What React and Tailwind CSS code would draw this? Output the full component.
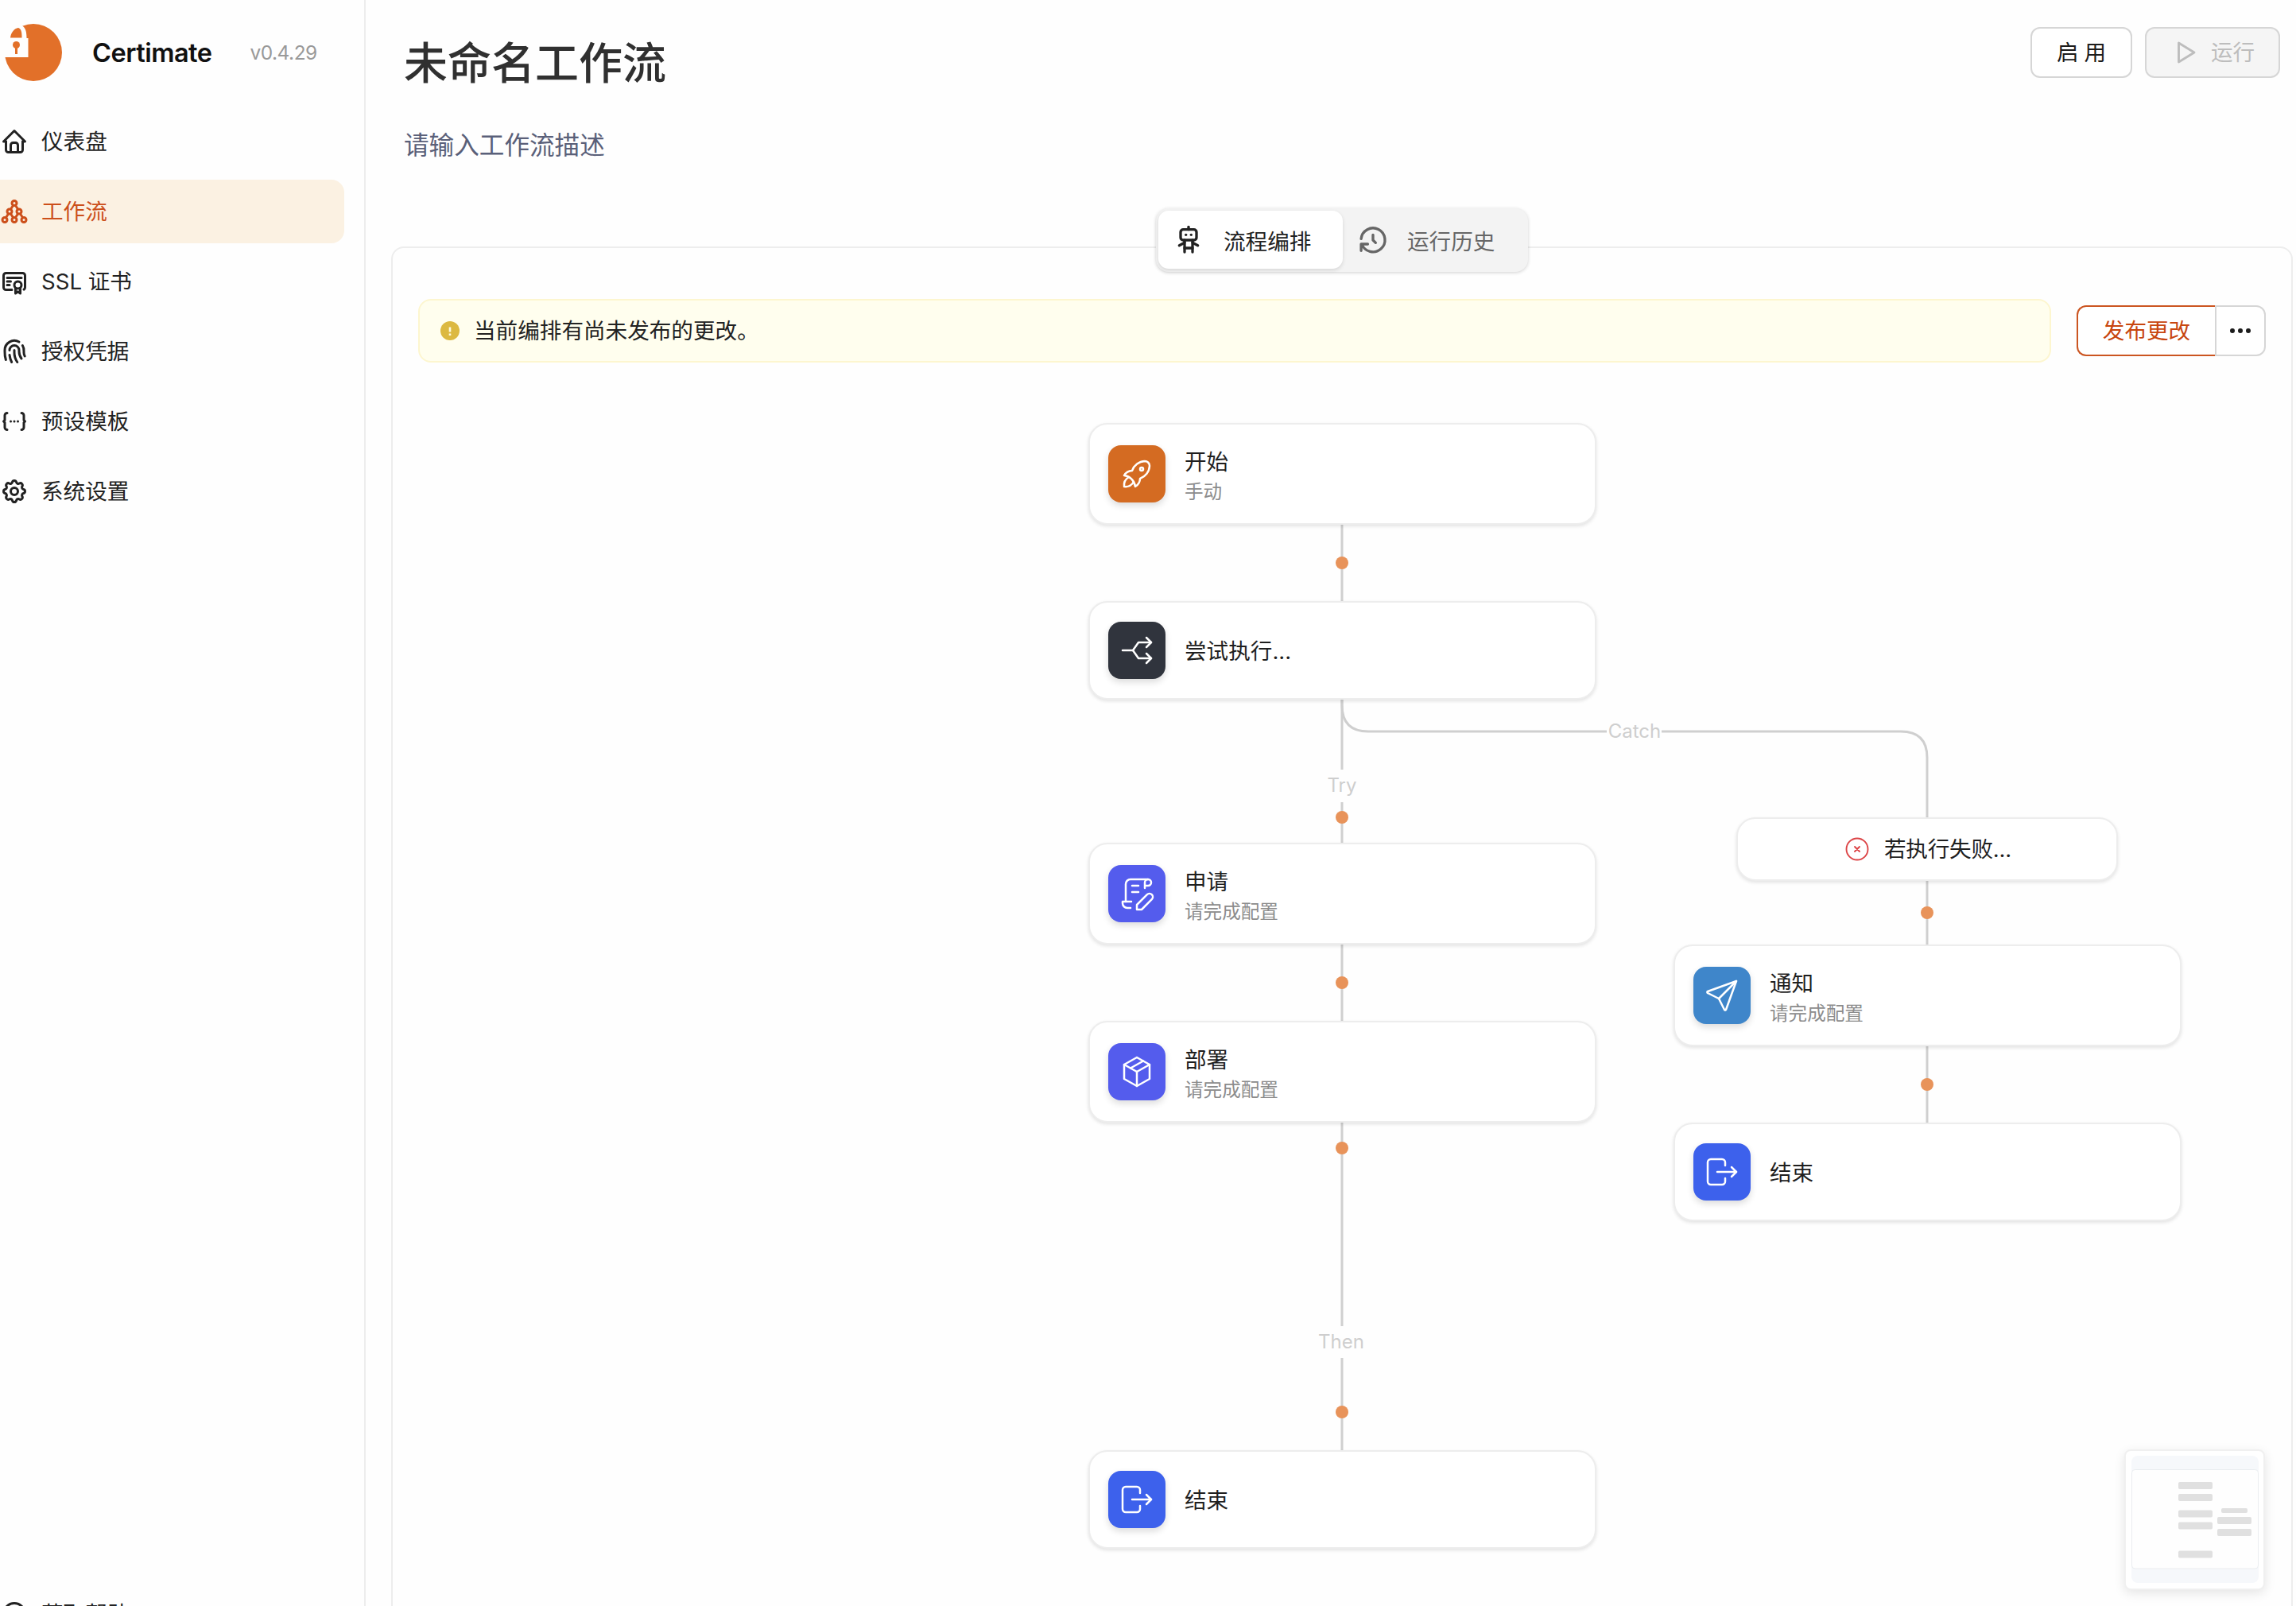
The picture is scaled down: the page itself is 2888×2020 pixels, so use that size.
import {
    TbArrowsSplit,
    TbCertificate,
    TbCircleX,
    TbCodeDots,
    TbContract,
    TbFingerprint,
    TbHelpCircle,
    TbHierarchy3,
    TbHistory,
    TbHome,
    TbLogout,
    TbPackage,
    TbPlayerPlay,
    TbRobot,
    TbRocket,
    TbSend,
    TbSettings,
} from 'react-icons/tb';
import clsx from 'clsx';

const menus = [
    { label: '仪表盘', icon: TbHome },
    { label: '工作流', icon: TbHierarchy3, active: true },
    { label: 'SSL 证书', icon: TbCertificate },
    { label: '授权凭据', icon: TbFingerprint },
    { label: '预设模板', icon: TbCodeDots },
    { label: '系统设置', icon: TbSettings },
];

// Bars shown in the minimap, in minimap units
const minimapBars = [
    [59, 33, 43, 9],
    [59, 48, 43, 9],
    [59, 68.5, 43, 9],
    [59, 83.5, 43, 9],
    [59, 119.5, 43, 9],
    [113, 66, 33, 6],
    [108, 77, 43, 9],
    [108, 92, 43, 9],
];

const Logo = () => (
    <svg viewBox="0 0 72 72" className="w-[72px] h-[72px] shrink-0">
        <circle cx="36" cy="36" r="36" fill="#e27029" />
        <path d="M-1 -1H22V2.500C26 4.500 27.500 10 27.500 18H29.500V42H-1Z" fill="#fefefe" />
        <path d="M7 17.500C7.500 11.500 12 5.500 17 5C20.500 6.500 21.500 9 21.500 17.500Z" fill="#e27029" />
        <circle cx="14.500" cy="26.500" r="4.500" fill="#e27029" />
        <path d="M14.500 28V38" stroke="#e27029" strokeWidth="3" />
    </svg>
);

const MenuItem = ({ label, icon: Icon, active }) => (
    <a
        className={clsx(
            'flex items-center gap-4 h-20 rounded-r-[16px] text-[27.6px] leading-none',
            active ? 'bg-[#fbf1e2] text-[#cc4f1b]' : 'text-[#222]'
        )}
    >
        <Icon size={36} strokeWidth={2} className="shrink-0" />
        <span className="pt-0.5">{label}</span>
    </a>
);

const Sidebar = () => (
    <aside className="w-[460px] shrink-0 h-full border-r-2 border-[#ededed] flex flex-col">
        <div className="flex items-center pl-1.5 pt-[30px]">
            <Logo />
            <span className="ml-[38px] pt-0.5 text-[32.500px] leading-none font-semibold tracking-[-0.5px] text-[#111]">Certimate</span>
            <span className="ml-[48px] text-[24.500px] leading-none text-[#999] tracking-[-0.5px]">v0.4.29</span>
        </div>
        <nav className="flex flex-col gap-2 mt-9 pr-[25px]">
            {menus.map((item) => (
                <MenuItem key={item.label} {...item} />
            ))}
        </nav>
        <div className="mt-auto -mb-[50px] pr-[25px]">
            <MenuItem label="获取帮助" icon={TbHelpCircle} />
        </div>
    </aside>
);

const Header = () => (
    <header className="h-[310px] shrink-0 flex justify-between pl-4 pr-[16px]">
        <div>
            <h1 className="mt-[51px] text-[55px] leading-[56px] font-medium text-[#303030]">未命名工作流</h1>
            <p className="mt-[60px] text-[31.600px] leading-8 text-[#5a6079]">请输入工作流描述</p>
        </div>
        <div className="flex gap-4 mt-[34px] h-16 text-[27.6px] leading-none">
            <button className="w-[128px] rounded-xl border-2 border-[#d6d6d6] bg-white text-[#1c1c1c] flex items-center justify-center gap-[7px] pt-0.5">
                <span>启</span>
                <span>用</span>
            </button>
            <button className="w-[170px] rounded-xl border-2 border-[#d6d6d6] bg-[#f5f5f5] text-[#bdbdbd] flex items-center justify-center gap-[15px]">
                <TbPlayerPlay size={36} strokeWidth={1.9} />
                <span className="pt-0.5">运行</span>
            </button>
        </div>
    </header>
);

const Tabs = () => (
    <div className="absolute left-1/2 -top-[50px] -translate-x-1/2 z-10 flex w-[468px] h-20 p-[3px] rounded-[16px] bg-[#f3f3f3] shadow-[0_1px_4px_rgba(0,0,0,0.18)] text-[27.6px] leading-none">
        <div className="flex items-center h-[73px] w-[232px] pl-[18px] gap-6 rounded-[13px] bg-white text-[#222] shadow-[0_2px_5px_rgba(0,0,0,0.12)]">
            <TbRobot size={40} strokeWidth={2} />
            <span className="pt-1.5">流程编排</span>
        </div>
        <div className="flex items-center h-[73px] pl-[18px] gap-[23px] text-[#666]">
            <TbHistory size={40} strokeWidth={2} />
            <span className="pt-1.5">运行历史</span>
        </div>
    </div>
);

const Toolbar = () => (
    <div className="flex items-center gap-8 px-8 pt-16">
        <div className="flex-1 h-20 flex items-center gap-[18px] pl-[26px] rounded-[16px] border-2 border-[#fdf6cf] bg-[#fffeee]">
            <svg viewBox="0 0 24 24" className="w-6 h-6">
                <circle cx="12" cy="12" r="12" fill="#dcb941" />
                <path d="M12 7.500V13.500M12 15.500V18" stroke="#fffbe0" strokeWidth="2.600" />
            </svg>
            <span className="pt-0.5 text-[27.6px] leading-none text-[#222]">当前编排有尚未发布的更改。</span>
        </div>
        <div className="flex h-16">
            <button className="w-[174px] rounded-l-xl border-2 border-r-0 border-[#cb5521] bg-white pt-0.5 text-[27.6px] leading-none text-[#c8460f]">
                发布更改
            </button>
            <button className="w-[64px] rounded-r-xl border-2 border-[#d6d6d6] bg-white flex items-center justify-center gap-[3.500px]">
                <span className="size-[6.500px] rounded-full bg-[#1c1c1c]" />
                <span className="size-[6.500px] rounded-full bg-[#1c1c1c]" />
                <span className="size-[6.500px] rounded-full bg-[#1c1c1c]" />
            </button>
        </div>
    </div>
);

const FlowNode = ({ className, color, icon: Icon, title, desc }) => (
    <div
        className={clsx(
            'absolute w-[639px] flex items-center gap-6 pl-[23px] rounded-[24px] border-2 border-[#ededed] bg-white shadow-[0_2px_4px_rgba(0,0,0,0.11)]',
            className
        )}
    >
        <div className={clsx('size-[72px] rounded-[16px] flex items-center justify-center text-white shadow-[0_4px_8px_rgba(0,0,0,0.14)]', color)}>
            <Icon size={48} strokeWidth={1.25} />
        </div>
        <div className={desc ? 'pt-[5px]' : 'pt-px'}>
            <div className="text-[27.6px] leading-9 text-[#1f1f1f]">{title}</div>
            {desc && <div className="mt-1 text-[23.6px] leading-8 text-[#8c8c8c]">{desc}</div>}
        </div>
    </div>
);

// Canvas origin is the inner corner of the bordered panel
const Canvas = () => (
    <>
        <svg viewBox="0 0 2388 1708" className="absolute left-0 top-0 w-[2388px] h-[1708px]" fill="none">
            <g stroke="#cfcfcf" strokeWidth="3">
                <path d="M1194 348V444M1194 568V656M1194 697V748M1194 875V972M1194 1100V1356M1194 1396V1512" />
                <path d="M1194 568V575Q1194 608 1227 608H1527M1596 608H1897Q1930 608 1930 641V716" />
                <path d="M1930 796V876M1930 1003V1100" />
            </g>
            <g fill="#e8935a">
                <circle cx="1194" cy="396" r="8" />
                <circle cx="1194" cy="716" r="8" />
                <circle cx="1194" cy="924" r="8" />
                <circle cx="1194" cy="1132" r="8" />
                <circle cx="1194" cy="1464" r="8" />
                <circle cx="1930" cy="836" r="8" />
                <circle cx="1930" cy="1052" r="8" />
            </g>
        </svg>

        <span className="absolute left-[1194px] top-[676px] -translate-1/2 text-[24px] leading-none text-[#cecece]">Try</span>
        <span className="absolute left-[1562px] top-[608px] -translate-1/2 text-[24px] leading-none text-[#cecece]">Catch</span>
        <span className="absolute left-[1193px] top-[1376px] -translate-1/2 text-[24px] leading-none text-[#cecece]">Then</span>

        <FlowNode className="left-[875px] top-[220px] h-[128px]" color="bg-[#d46b22]" icon={TbRocket} title="开始" desc="手动" />
        <FlowNode className="left-[875px] top-[444px] h-[124px]" color="bg-[#30343d]" icon={TbArrowsSplit} title="尝试执行..." />
        <FlowNode className="left-[875px] top-[748px] h-[128px]" color="bg-[#545ced]" icon={TbContract} title="申请" desc="请完成配置" />
        <FlowNode className="left-[875px] top-[972px] h-[128px]" color="bg-[#545ced]" icon={TbPackage} title="部署" desc="请完成配置" />
        <FlowNode className="left-[875px] top-[1512px] h-[124px]" color="bg-[#3d61ec]" icon={TbLogout} title="结束" />
        <FlowNode className="left-[1611px] top-[876px] h-[128px]" color="bg-[#3f86ca]" icon={TbSend} title="通知" desc="请完成配置" />
        <FlowNode className="left-[1611px] top-[1100px] h-[124px]" color="bg-[#3d61ec]" icon={TbLogout} title="结束" />

        <div className="absolute left-[1690px] top-[716px] w-[480px] h-20 flex items-center justify-center gap-4 rounded-[24px] border-2 border-[#ededed] bg-white shadow-[0_2px_4px_rgba(0,0,0,0.11)]">
            <TbCircleX size={36} strokeWidth={1.25} className="text-[#dc4446]" />
            <span className="pt-0.5 text-[27.6px] leading-none tracking-[-0.2px] text-[#1f1f1f]">若执行失败...</span>
        </div>
    </>
);

const Minimap = () => (
    <div className="absolute left-[2178px] top-[1511px] w-[177px] h-[177px] rounded-lg bg-white border-2 border-[#f0f0f0] shadow-[0_4px_14px_rgba(0,0,0,0.1)] px-[7px] pt-1.5">
        <svg viewBox="0 0 160 160" className="w-[160px] h-[160px]">
            <rect width="160" height="160" rx="8" fill="#f6f8fb" />
            <rect x="0.500" y="17.500" width="159" height="124.500" rx="4" fill="#fefefe" stroke="#eaedf0" />
            {minimapBars.map(([x, y, w, h]) => (
                <rect key={`${x}-${y}`} x={x} y={y} width={w} height={h} rx="2" fill="#e0e0e0" />
            ))}
        </svg>
    </div>
);

export default function App() {
    return (
        <div className="flex w-[2888px] h-[2020px] overflow-hidden bg-[#fefefe] font-['Inter','Noto_Sans_CJK_SC',sans-serif]">
            <Sidebar />
            <main className="flex-1 flex flex-col pl-8 pr-1">
                <Header />
                <section className="relative h-[1760px] shrink-0 rounded-[16px] border-2 border-[#ededed]">
                    <Tabs />
                    <Canvas />
                    <Toolbar />
                    <Minimap />
                </section>
            </main>
        </div>
    );
}
